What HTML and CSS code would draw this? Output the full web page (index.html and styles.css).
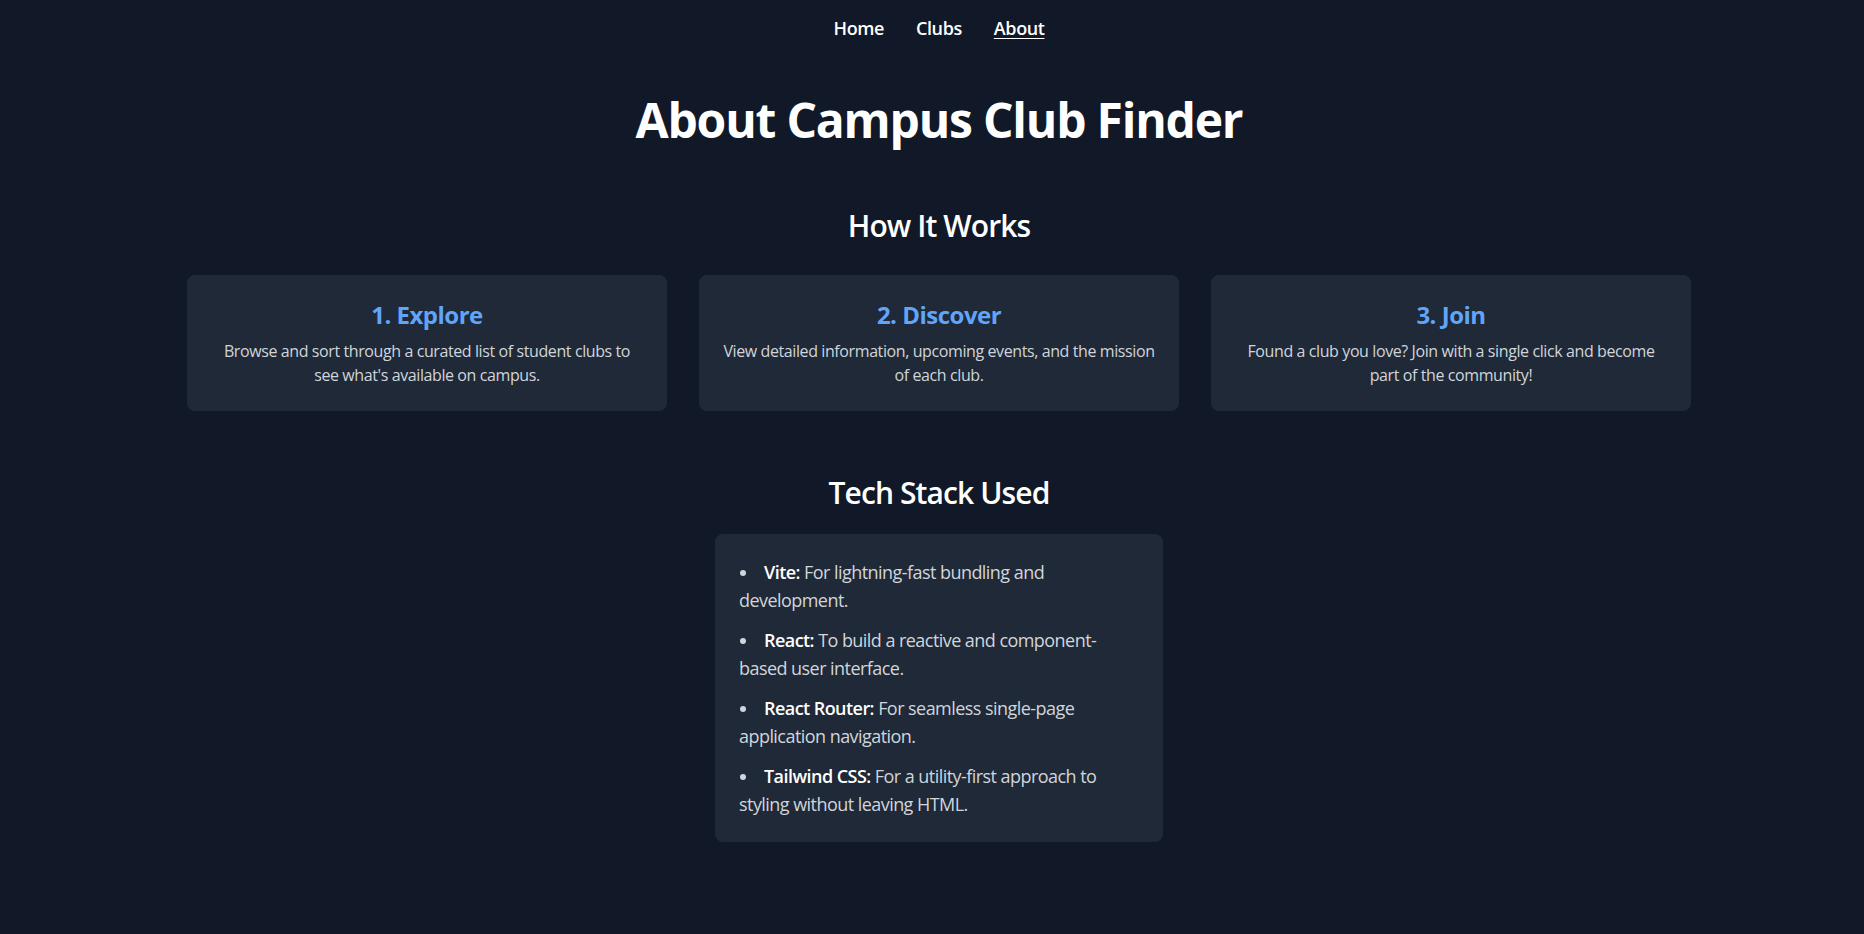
FILE: index.html
```html
<!DOCTYPE html>
<html lang="en">
<head>
<meta charset="utf-8">
<title>About Campus Club Finder</title>
<link rel="stylesheet" href="styles.css">
</head>
<body>
<div class="page">
  <nav class="nav">
    <a class="nav-link" href="#">Home</a>
    <a class="nav-link" href="#">Clubs</a>
    <a class="nav-link active" href="#">About</a>
  </nav>
  <main class="main">
    <h1 class="title">About Campus Club Finder</h1>

    <section class="section">
      <h2 class="section-title">How It Works</h2>
      <div class="cards">
        <div class="card">
          <h3 class="card-title">1. Explore</h3>
          <p class="card-text">Browse and sort through a curated list of student clubs to see what's available on campus.</p>
        </div>
        <div class="card">
          <h3 class="card-title">2. Discover</h3>
          <p class="card-text">View detailed information, upcoming events, and the mission of each club.</p>
        </div>
        <div class="card">
          <h3 class="card-title">3. Join</h3>
          <p class="card-text">Found a club you love? Join with a single click and become part of the community!</p>
        </div>
      </div>
    </section>

    <section class="section section-tech">
      <h2 class="section-title">Tech Stack Used</h2>
      <div class="tech-box">
        <ul class="tech-list">
          <li class="tech-item"><strong class="tech-name">Vite:</strong> For lightning-fast bundling and development.</li>
          <li class="tech-item"><strong class="tech-name">React:</strong> To build a reactive and component-based user interface.</li>
          <li class="tech-item"><strong class="tech-name">React Router:</strong> For seamless single-page application navigation.</li>
          <li class="tech-item"><strong class="tech-name">Tailwind CSS:</strong> For a utility-first approach to styling without leaving HTML.</li>
        </ul>
      </div>
    </section>
  </main>
</div>
</body>
</html>
```

FILE: styles.css
```css
* {
  box-sizing: border-box;
}

html, body {
  margin: 0;
  padding: 0;
  background: #111827;
}

body {
  font-family: "Open Sans", "Noto Sans", "Liberation Sans", sans-serif;
  color: #ffffff;
  min-height: 934px;
}

.page {
  padding-left: 14px;
}

.nav {
  display: flex;
  justify-content: center;
  gap: 32px;
  padding: 14px 0;
}

.nav-link {
  color: #ffffff;
  text-decoration: none;
  font-size: 18px;
  line-height: 28px;
  font-weight: 600;
  letter-spacing: -0.4px;
}

.nav-link.active {
  text-decoration: underline;
  text-underline-offset: 3px;
}

.main {
  display: flex;
  flex-direction: column;
  align-items: center;
  padding-top: 40px;
}

.title {
  margin: 0;
  font-size: 48px;
  line-height: 48px;
  font-weight: 700;
  letter-spacing: -1.2px;
}

.section {
  width: 100%;
  display: flex;
  flex-direction: column;
  align-items: center;
  margin-top: 64px;
}

.section-title {
  margin: 0 0 31px;
  font-size: 30px;
  line-height: 36px;
  font-weight: 600;
  letter-spacing: -0.9px;
}

.section-tech .section-title {
  margin-bottom: 23px;
}

.cards {
  display: grid;
  grid-template-columns: repeat(3, 480px);
  gap: 32px;
}

.card {
  background: #1f2937;
  border-radius: 8px;
  padding: 24px;
  text-align: center;
}

.card-title {
  margin: 0;
  color: #60a5fa;
  font-size: 24px;
  line-height: 32px;
  font-weight: 700;
  letter-spacing: -0.5px;
}

.card-text {
  margin: 8px 0 0;
  color: #d1d5db;
  font-size: 16px;
  line-height: 24px;
  letter-spacing: -0.4px;
}

.tech-box {
  width: 448px;
  background: #1f2937;
  border-radius: 8px;
  padding: 24px;
}

.tech-list {
  list-style: none;
  margin: 0;
  padding: 0;
  display: flex;
  flex-direction: column;
  gap: 12px;
  color: #d1d5db;
  font-size: 18px;
  line-height: 28px;
  letter-spacing: -0.55px;
}

.tech-item::before {
  content: "";
  display: inline-block;
  width: 6px;
  height: 6px;
  border-radius: 50%;
  background: #d1d5db;
  margin-left: 1px;
  margin-right: 18px;
  vertical-align: 3px;
}

.tech-name {
  color: #ffffff;
  font-weight: 600;
}
```
